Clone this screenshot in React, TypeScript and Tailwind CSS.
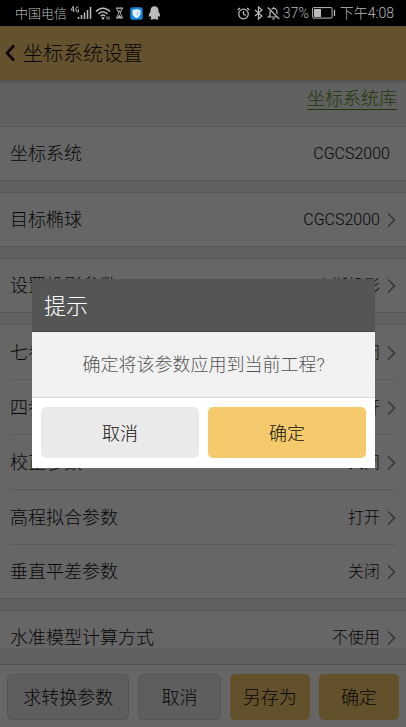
import React from "react";

type Row = { label: string; value: string; plain?: boolean };

const groups: Row[][] = [
  [{ label: "坐标系统", value: "CGCS2000", plain: true }],
  [{ label: "目标椭球", value: "CGCS2000" }],
  [{ label: "设置投影参数", value: "高斯投影" }],
  [
    { label: "七参数", value: "关闭" },
    { label: "四参数", value: "打开" },
    { label: "校正参数", value: "关闭" },
    { label: "高程拟合参数", value: "打开" },
    { label: "垂直平差参数", value: "关闭" },
  ],
  [{ label: "水准模型计算方式", value: "不使用" }],
];

const StatusBar = () => (
  <div className="flex h-[26px] shrink-0 items-center justify-between bg-black pl-[15px] pr-3 text-[13px] leading-none text-[#bbb]">
    <div className="flex items-center">
      <span>中国电信</span>
      <svg className="ml-[3px]" width="22" height="18" viewBox="0 0 22 18" fill="none" stroke="currentColor">
        <path d="M3.500 8V2L1 6h3.500M8.500 3H7L6 4v3l1 1h1.500V5.500h-1" strokeWidth="0.9" />
        <path d="M8.500 15v-2M11.500 15v-4M14.500 15V8.500M17.500 15V6M20.500 15V3" strokeWidth="1.500" />
      </svg>
      <svg className="ml-[3px]" width="16" height="16" viewBox="0 0 16 16" fill="none" stroke="currentColor" strokeWidth="1.500">
        <path d="M1 6.500c4-4.500 10-4.500 14 0M3.500 9c2.500-3 6.500-3 9 0M5.800 11.200c1.300-1.500 3-1.500 4.400 0" />
        <circle cx="8" cy="13.300" r="1.200" fill="currentColor" stroke="none" />
        <path d="M12 14.500v-3M14 11.500v3" strokeWidth="1" />
      </svg>
      <svg className="ml-1" width="9" height="12" viewBox="0 0 9 12" fill="none" stroke="currentColor">
        <path d="M1 1.200h7M1 10.800h7" strokeWidth="1.300" />
        <path d="M2 1.500c0 3 1.700 3 1.700 4.500S2 7.500 2 10.500M7 1.500c0 3-1.700 3-1.700 4.500S7 7.500 7 10.500" />
        <path d="M3 3.500h3L4.500 5.500zM4.500 7.500L6.500 10.500h-4z" fill="currentColor" stroke="none" />
      </svg>
      <svg className="ml-[6px]" width="13" height="13" viewBox="0 0 13 13">
        <rect x="0.300" y="0.300" width="12.400" height="12.400" rx="2" fill="#1687dc" />
        <path d="M6.500 2L10.500 3.300v3.200c0 2.300-2 3.800-4 4.700-2-.9-4-2.400-4-4.700V3.300z" fill="#e6f3ff" />
        <path d="M6.500 3.800L9 4.600v2c0 1.500-1.300 2.500-2.500 3z" fill="#b2dcf8" />
      </svg>
      <svg className="ml-[5px]" width="13" height="14" viewBox="0 0 13 14" fill="currentColor">
        <path d="M6.500.3C3.900.3 2.500 2.200 2.500 4.500v1.200C1.600 7 .8 8.500.8 10c0 .8.400 1 .9.500l.6-.7c.2.800.600 1.400 1.100 1.900-.8.300-1.100.7-.9 1.200.3.800 3.200.7 4 .1.800.600 3.700.700 4-.1.200-.5-.1-.9-.9-1.200.5-.5.900-1.100 1.100-1.900l.6.700c.5.500.9.300.9-.5 0-1.500-.8-3-1.700-4.300V4.500C10.500 2.200 9.100.3 6.500.3z" />
      </svg>
    </div>
    <div className="flex items-center">
      <svg width="13" height="13" viewBox="0 0 13 13" fill="none" stroke="currentColor" strokeWidth="1.300">
        <circle cx="6.500" cy="7" r="4.800" />
        <path d="M6.500 4v3.200l2.300 1.300M.7 3L3 .9M12.300 3L10 .9" />
      </svg>
      <svg className="ml-1" width="9" height="14" viewBox="0 0 9 14" fill="none" stroke="currentColor" strokeWidth="1.200">
        <path d="M1 4l7 6-3.500 3V1L8 4l-7 6" />
      </svg>
      <svg className="ml-1" width="13" height="14" viewBox="0 0 13 14" fill="none" stroke="currentColor" strokeWidth="1.200">
        <path d="M4.500 3C7.500 1.300 10 3.200 10 6v2M3 5v4.500l-1.500 1.500H10M6.500 1v1.500M5.300 12.800h2.400M.8 1.500l11.400 11.500" />
      </svg>
      <span className="ml-[3px] text-sm">37%</span>
      <svg className="ml-[3px]" width="24" height="12" viewBox="0 0 24 12" fill="none" stroke="currentColor">
        <rect x="0.600" y="0.600" width="19.500" height="10.500" rx="1" />
        <rect x="2" y="2" width="7" height="8" fill="currentColor" stroke="none" />
        <path d="M22.500 3v6" strokeWidth="1.300" />
      </svg>
      <span className="ml-1 text-sm">下午4:08</span>
    </div>
  </div>
);

const Chevron = () => (
  <svg className="ml-[7px] shrink-0" width="9" height="16" viewBox="0 0 9 16" fill="none" stroke="#888" strokeWidth="1.600">
    <path d="M1 1.500L7.500 8 1 14.500" />
  </svg>
);

const SettingGroup = ({ rows }: { rows: Row[] }) => (
  <ul className="mb-[11px] border-y border-[#d6d6d6] bg-white">
    {rows.map((row, idx) => (
      <li key={row.label} className="px-[10px]">
        <button
          type="button"
          className={`flex w-full items-center justify-between pt-px text-left ${
            idx === rows.length - 1 ? "h-[53px]" : "h-[55px] border-b border-[#e2e2e2]"
          }`}
        >
          <span className="text-lg">{row.label}</span>
          <span className="flex items-center">
            <span className={row.plain ? "mr-[6px]" : ""}>{row.value}</span>
            {!row.plain && <Chevron />}
          </span>
        </button>
      </li>
    ))}
  </ul>
);

const ConfirmDialog = () => (
  <div className="fixed inset-x-0 bottom-0 top-[26px] flex items-center justify-center bg-black/60 pb-[6px] pl-8 pr-[31px]">
    <div role="dialog" aria-modal="true" aria-labelledby="dialog-title" className="w-full max-w-md bg-white">
      <h2
        id="dialog-title"
        className="flex h-[53px] items-center border-b border-[#444] bg-[#555] px-3 pt-[2px] text-[22px] text-white"
      >
        提示
      </h2>
      <p className="flex h-[66px] items-center justify-center border-b border-[#d8d8d8] bg-[#f1f1f1] text-lg text-[#555]">
        确定将该参数应用到当前工程?
      </p>
      <div className="flex gap-[9px] px-[9px] pb-[10px] pt-[9px]">
        <button type="button" className="h-[51px] flex-1 rounded-[5px] bg-[#eaeaea] pt-[2px] text-lg">
          取消
        </button>
        <button type="button" className="h-[51px] flex-1 rounded-[5px] bg-[#f4ca6c] pt-[2px] text-lg">
          确定
        </button>
      </div>
    </div>
  </div>
);

const App = () => {
  return (
    <div className="flex h-screen flex-col bg-[#f3f3f3] font-['Roboto','Noto_Sans_CJK_SC',sans-serif] font-light text-[#111]">
      <StatusBar />
      <header className="relative flex h-[54px] shrink-0 items-center bg-[#f8cc70] pl-[5px] shadow-[0_1px_4px_rgba(0,0,0,0.25)]">
        <button type="button" aria-label="返回" className="mr-2">
          <svg width="10" height="18" viewBox="0 0 10 18" fill="none" stroke="#2b0d08" strokeWidth="2.600">
            <path d="M9 1.500L2 9l7 7.500" />
          </svg>
        </button>
        <h1 className="pt-[2px] text-xl">坐标系统设置</h1>
      </header>

      <main className="min-h-0 flex-1 overflow-hidden">
        <div className="flex h-[46px] items-center justify-end pb-[7px] pr-[9px]">
          <a href="#library" className="border-b border-[#4c8c08] text-lg leading-5 text-[#4c8c08]">
            坐标系统库
          </a>
        </div>
        {groups.map((rows) => (
          <SettingGroup key={rows[0].label} rows={rows} />
        ))}
      </main>

      <footer className="mt-4 flex shrink-0 gap-[9px] border-t border-[#ccc] bg-white px-[7px] pb-[7px] pt-[9px] text-lg">
        <button type="button" className="h-[46px] flex-[3] rounded-[5px] border border-[#d4d4d4] bg-[#eaeaea] pt-[2px]">
          求转换参数
        </button>
        <button type="button" className="h-[46px] flex-[2] rounded-[5px] border border-[#d4d4d4] bg-[#eaeaea] pt-[2px]">
          取消
        </button>
        <button type="button" className="h-[46px] flex-[2] rounded-[5px] bg-[#f4ca6c] pt-[2px]">
          另存为
        </button>
        <button type="button" className="h-[46px] flex-[2] rounded-[5px] bg-[#f4ca6c] pt-[2px]">
          确定
        </button>
      </footer>

      <ConfirmDialog />
    </div>
  );
};

export default App;
